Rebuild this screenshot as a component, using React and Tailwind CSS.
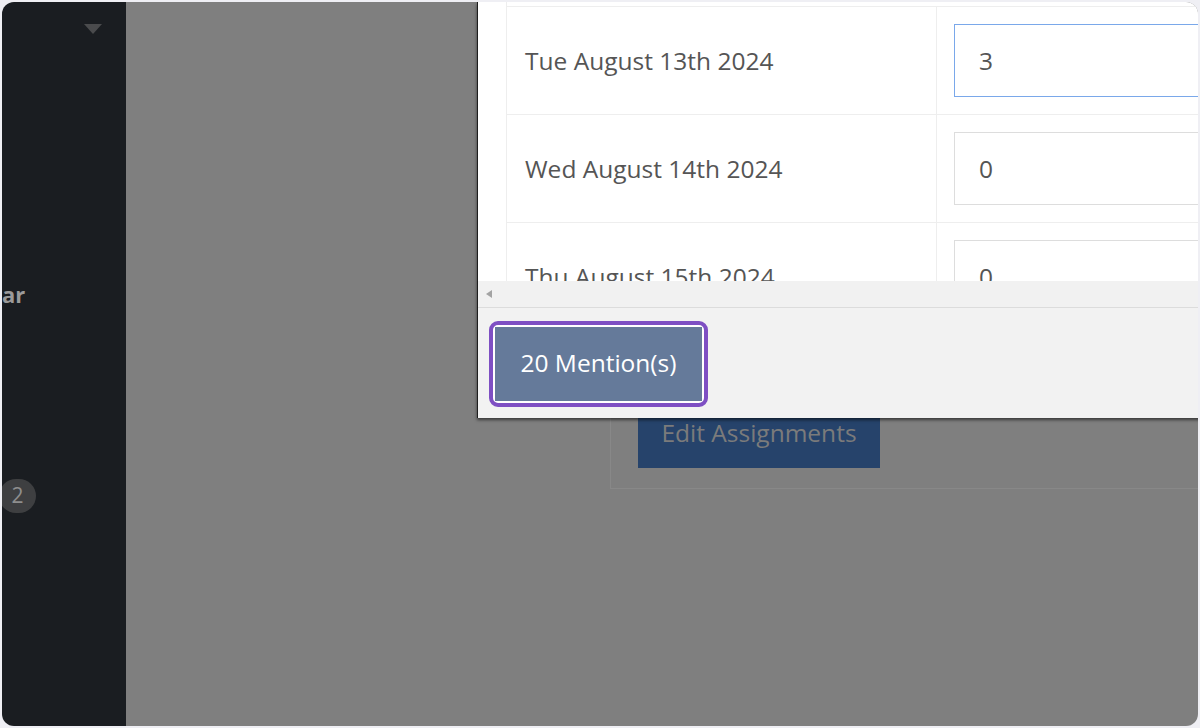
import React from 'react';

const rows = [
  { date: 'Tue August 13th 2024', value: '3', focused: true },
  { date: 'Wed August 14th 2024', value: '0' },
  { date: 'Thu August 15th 2024', value: '0' },
];

function Sidebar() {
  return (
    <aside className="w-[124px] shrink-0 bg-[#1a1d21] flex flex-col">
      {/* collapsed menu caret */}
      <div className="h-[22px]" />
      <div className="flex pl-[82px]">
        <div className="w-0 h-0 border-l-[9px] border-r-[9px] border-t-[10px] border-l-transparent border-r-transparent border-t-[#4a4b4d]" />
      </div>

      <div className="mt-[245px] text-[22px] leading-[30px] font-bold text-[#9a9a9a]">ar</div>

      <div className="mt-[170px] -ml-[3px] w-[37px] h-[34px] rounded-full bg-[#3e3f41] flex items-center justify-center text-[21px] text-[#8e8e8e]">
        2
      </div>
    </aside>
  );
}

function Modal() {
  return (
    <div className="absolute top-0 left-[351px] w-[900px] h-[416px] bg-white border-l border-[#1e1e1e] shadow-[0_2px_3px_rgba(0,0,0,0.55)] flex flex-col">
      {/* scrolled table */}
      <div className="h-[279px] overflow-hidden pl-[28px]">
        <div className="h-[4px] border-l border-[#eeeeee] w-[431px]" />
        {rows.map((r) => (
          <div key={r.date} className="flex h-[108px] border-t border-[#eeeeee]">
            <div className="w-[431px] border-l border-r border-[#eeeeee] flex items-center pl-[18px] pt-[2px] text-[24.5px] text-[#555555]">
              {r.date}
            </div>
            <div className="flex-1 pl-[17px] pt-[17px]">
              <div
                className={`h-[73px] w-[400px] border flex items-center pl-[24px] pt-[1px] text-[24.5px] text-[#555555] ${
                  r.focused ? 'border-[#7aa8ea]' : 'border-[#dddddd]'
                }`}
              >
                {r.value}
              </div>
            </div>
          </div>
        ))}
      </div>

      {/* horizontal scrollbar */}
      <div className="h-[26px] bg-[#f1f1f1] flex items-center pl-[8px]">
        <div className="w-0 h-0 border-t-[4px] border-b-[4px] border-r-[6px] border-t-transparent border-b-transparent border-r-[#a3a3a3]" />
      </div>

      {/* footer */}
      <div className="flex-1 bg-[#f2f2f2] border-t border-[#dcdcdc] pt-[13px] pl-[11px]">
        <div className="inline-flex rounded-[9px] border-[4px] border-[#7e4fc3] bg-white p-[2px]">
          <button className="w-[207px] h-[74px] bg-[#657a9a] text-white text-[24.5px] flex items-center justify-center pb-[2px]">
            20 Mention(s)
          </button>
        </div>
      </div>
    </div>
  );
}

export default function App() {
  return (
    <div className="w-[1200px] h-[728px] bg-[#efeff4] p-[2px]" style={{ fontFamily: '"Open Sans", "Noto Sans", sans-serif' }}>
      <div className="w-full h-full rounded-[12px] overflow-hidden flex">
        <Sidebar />
        <main className="relative flex-1 bg-[#7f7f7f] overflow-hidden">
          {/* page content under the overlay */}
          <div className="ml-[484px] h-[487px] border-l border-b border-[#888888] flex flex-col justify-end pl-[27px] pb-[20px]">
            <div className="w-[242px] h-[60px] bg-[#26436b] flex items-end justify-center pb-[16px] text-[24.5px] text-[#7b7b7b]">
              Edit Assignments
            </div>
          </div>
          <Modal />
        </main>
      </div>
    </div>
  );
}
